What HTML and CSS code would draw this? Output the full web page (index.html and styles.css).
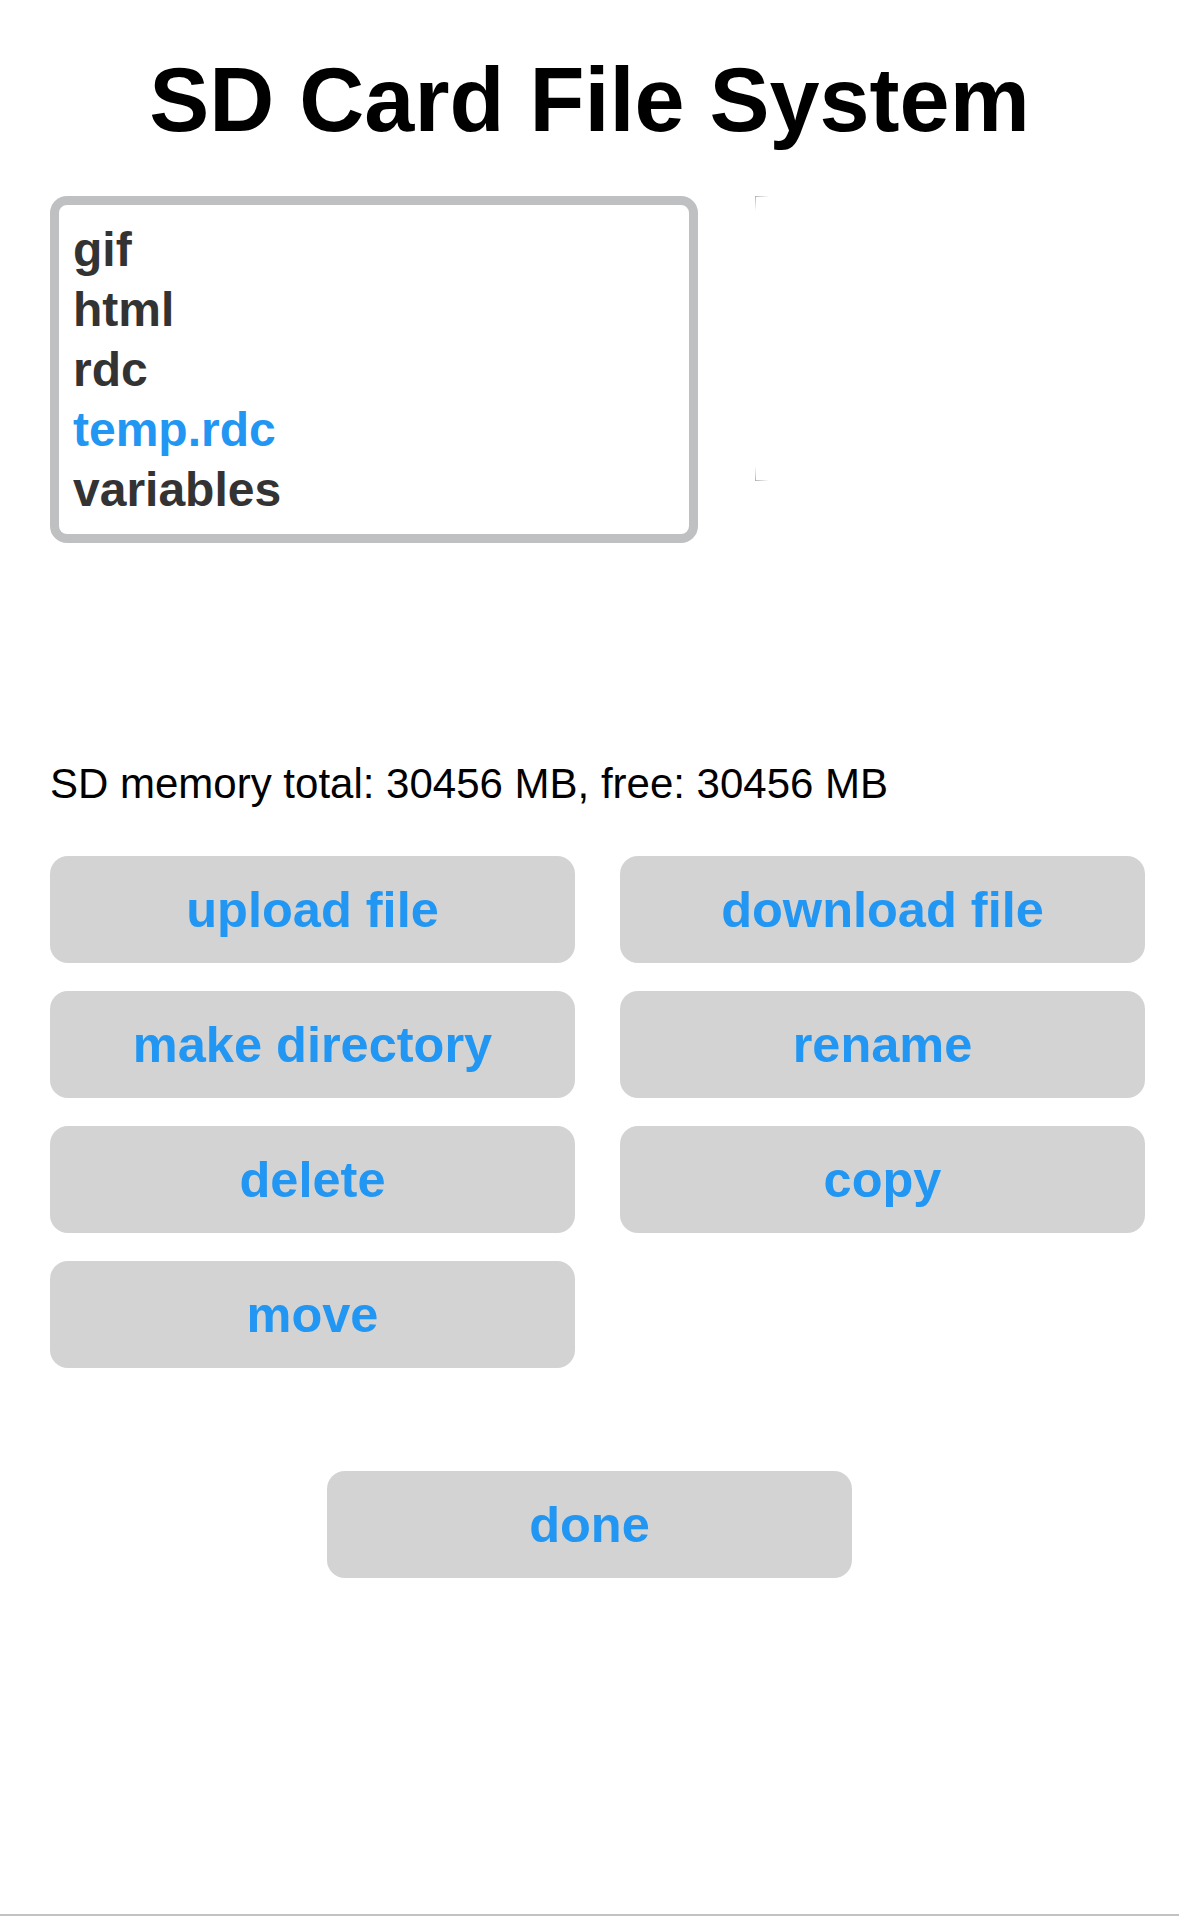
FILE: index.html
```html
<!DOCTYPE html>
<html lang="en">
<head>
<meta charset="utf-8">
<title>SD Card File System</title>
<link rel="stylesheet" href="styles.css">
</head>
<body>
<div class="page">
  <h1 class="title">SD Card File System</h1>
  <div class="browser">
    <ul class="file-list">
      <li class="file">gif</li>
      <li class="file">html</li>
      <li class="file">rdc</li>
      <li class="file selected">temp.rdc</li>
      <li class="file">variables</li>
    </ul>
    <div class="preview"></div>
  </div>
  <p class="memory">SD memory total: 30456 MB, free: 30456 MB</p>
  <div class="actions">
    <button class="btn">upload file</button>
    <button class="btn">download file</button>
    <button class="btn">make directory</button>
    <button class="btn">rename</button>
    <button class="btn">delete</button>
    <button class="btn">copy</button>
    <button class="btn">move</button>
  </div>
  <div class="done-row">
    <button class="btn">done</button>
  </div>
</div>
<div class="bottom-line"></div>
</body>
</html>
```
FILE: styles.css
```css
html, body {
  margin: 0;
  padding: 0;
  background: #ffffff;
}
body {
  font-family: "Liberation Sans", Arial, sans-serif;
  color: #000;
  height: 1916px;
  display: flex;
  flex-direction: column;
}
.page {
  flex: 1;
  display: flex;
  flex-direction: column;
}
.title {
  margin: 48px 0 0 0;
  font-size: 90px;
  line-height: 105px;
  font-weight: bold;
  text-align: center;
  color: #000;
}
.browser {
  display: flex;
  align-items: flex-start;
  margin: 43px 0 0 50px;
}
.file-list {
  list-style: none;
  margin: 0;
  box-sizing: border-box;
  width: 648px;
  height: 347px;
  padding: 15px 14px 10px 14px;
  border: 9px solid #bfc0c2;
  border-radius: 17px;
  font-size: 48px;
  line-height: 60px;
  font-weight: bold;
  color: #333333;
}
.file.selected {
  color: #2196f3;
}
.preview {
  margin-left: 57px;
  width: 16px;
  height: 285px;
  background:
    linear-gradient(to right, #b4b4b4, rgba(255,255,255,0)) 0 0 / 14px 1px no-repeat,
    linear-gradient(to bottom, #b4b4b4, rgba(255,255,255,0)) 0 0 / 1px 15px no-repeat,
    linear-gradient(to right, #b4b4b4, rgba(255,255,255,0)) 0 100% / 14px 1px no-repeat,
    linear-gradient(to top, #b4b4b4, rgba(255,255,255,0)) 0 100% / 1px 15px no-repeat;
}
.memory {
  margin: 217px 0 0 50px;
  font-size: 42px;
  line-height: 48px;
  color: #000;
}
.actions {
  margin: 48px 0 0 50px;
  width: 1095px;
  display: grid;
  grid-template-columns: 525px 525px;
  column-gap: 45px;
  row-gap: 28px;
}
.btn {
  height: 107px;
  border: none;
  border-radius: 18px;
  background: #d3d3d3;
  color: #2196f3;
  font-family: "Liberation Sans", Arial, sans-serif;
  font-size: 50.5px;
  font-weight: bold;
  padding: 0;
  margin: 0;
}
.done-row {
  margin-top: 103px;
  display: flex;
  justify-content: center;
}
.done-row .btn {
  width: 525px;
}
.bottom-line {
  height: 2px;
  background: #c2c2c2;
}
```
